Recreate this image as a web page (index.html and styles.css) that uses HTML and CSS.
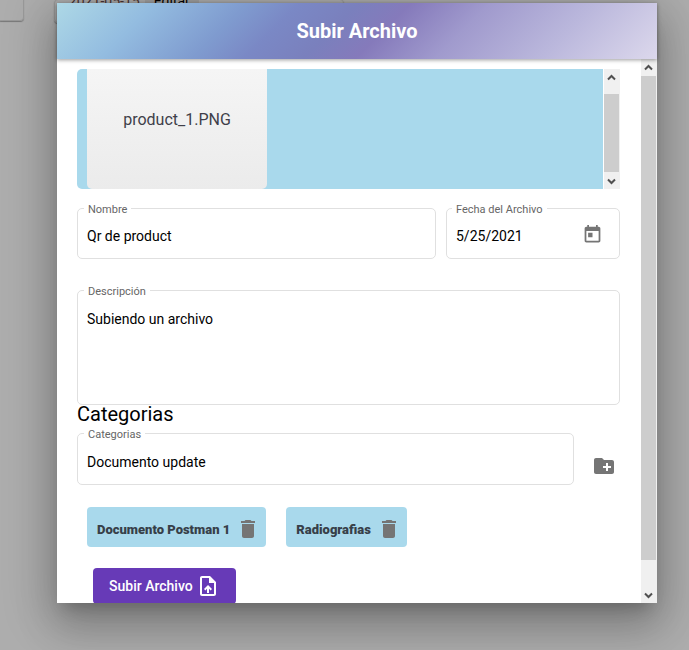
FILE: index.html
```html
<!DOCTYPE html>
<html lang="es">
<head>
<meta charset="utf-8">
<meta name="viewport" content="width=device-width, initial-scale=1">
<title>Subir Archivo</title>
<link rel="stylesheet" href="styles.css">
</head>
<body>
<div class="page">
  <div class="page-card page-card-start"></div>
  <div class="page-card"><span>2021-05-15</span><span class="page-edit">Editar</span></div>
</div>
<main class="dialog" role="dialog" aria-labelledby="title">
  <header class="dialog-header"><h1 id="title">Subir Archivo</h1></header>
  <div class="dialog-body">
    <form class="content">
      <section class="preview">
        <div class="preview-area"><div class="file">product_1.PNG</div></div>
        <div class="scrollbar scrollbar-preview" aria-hidden="true">
          <svg class="arrow" viewBox="0 0 9 7"><path d="M1 5.500 4.500 2 8 5.500"/></svg>
          <div class="thumb"></div>
          <svg class="arrow" viewBox="0 0 9 7"><path d="M1 1.500 4.500 5 8 1.500"/></svg>
        </div>
      </section>
      <div class="row">
        <div class="field field-name">
          <label for="name">Nombre</label>
          <input id="name" type="text" value="Qr de product">
        </div>
        <div class="field field-date">
          <label for="date">Fecha del Archivo</label>
          <input id="date" type="text" value="5/25/2021">
          <button class="icon-button" type="button" aria-label="Abrir calendario">
            <svg class="icon-date" viewBox="0 0 24 24"><path d="M19 3h-1V1h-2v2H8V1H6v2H5c-1.110 0-2 .9-2 2v14c0 1.100.89 2 2 2h14c1.100 0 2-.9 2-2V5c0-1.100-.9-2-2-2zm0 16H5V8h14v11zM7 10h5v5H7z"/></svg>
          </button>
        </div>
      </div>
      <div class="field field-description">
        <label for="description">Descripción</label>
        <textarea id="description">Subiendo un archivo</textarea>
      </div>
      <h2>Categorias</h2>
      <div class="row row-category">
        <div class="field field-category">
          <label for="category">Categorias</label>
          <input id="category" type="text" value="Documento update">
        </div>
        <button class="icon-button add" type="button" aria-label="Agregar categoria">
          <svg class="icon" viewBox="0 0 24 24"><path d="M20 6h-8l-2-2H4c-1.110 0-1.990.89-1.990 2L2 18c0 1.110.89 2 2 2h16c1.110 0 2-.89 2-2V8c0-1.110-.89-2-2-2zm-1 8h-3v3h-2v-3h-3v-2h3V9h2v3h3v2z"/></svg>
        </button>
      </div>
      <div class="chips">
        <div class="chip">Documento Postman 1
          <button class="icon-button" type="button" aria-label="Eliminar Documento Postman 1"><svg class="icon" viewBox="0 0 24 24"><path d="M6 19c0 1.100.9 2 2 2h8c1.100 0 2-.9 2-2V7H6v12zM19 4h-3.500l-1-1h-5l-1 1H5v2h14V4z"/></svg></button>
        </div>
        <div class="chip">Radiografias
          <button class="icon-button" type="button" aria-label="Eliminar Radiografias"><svg class="icon" viewBox="0 0 24 24"><path d="M6 19c0 1.100.9 2 2 2h8c1.100 0 2-.9 2-2V7H6v12zM19 4h-3.500l-1-1h-5l-1 1H5v2h14V4z"/></svg></button>
        </div>
      </div>
      <button class="submit" type="submit">Subir Archivo
        <svg class="icon" viewBox="0 0 24 24"><path d="M14 2H6c-1.100 0-1.990.9-1.990 2L4 20c0 1.100.89 2 1.990 2H18c1.100 0 2-.9 2-2V8l-6-6zm4 18H6V4h7v5h5v11zM8 15.010l1.410 1.410L11 14.840V19h2v-4.160l1.590 1.590L16 15.010 12.010 11 8 15.010z"/></svg>
      </button>
    </form>
    <div class="scrollbar" aria-hidden="true">
      <svg class="arrow" viewBox="0 0 9 7"><path d="M1 5.500 4.500 2 8 5.500"/></svg>
      <div class="thumb"></div>
      <svg class="arrow" viewBox="0 0 9 7"><path d="M1 1.500 4.500 5 8 1.500"/></svg>
    </div>
  </div>
</main>
</body>
</html>
```
FILE: styles.css
```css
* { box-sizing: border-box; }

body {
  margin: 0;
  height: 100vh;
  padding: 3px 32px 47px 57px;
  display: flex;
  background: #adadad;
  color: #000;
  font-family: Roboto, "Liberation Sans", sans-serif;
  font-size: 14px;
  overflow: hidden;
}

button, input, textarea { font: inherit; color: inherit; }

/* Page seen behind the dialog */
.page {
  position: absolute;
  inset: 0;
  display: flex;
  align-items: flex-start;
  gap: 30px;
}

.page-card {
  width: 290px;
  height: 24px;
  margin-top: -1px;
  padding-left: 14px;
  border: 1px solid #999;
  border-radius: 4px;
  box-shadow: 0 1px 1px #777;
  line-height: 2px;
  white-space: nowrap;
}

.page-card span { color: #4a3434; }
.page-card .page-edit {
  display: inline-block;
  margin-left: 5px;
  padding: 0 9px 3px;
  background: #a0a0a0;
  color: #000;
}

.page-card-start {
  width: 24px;
  height: 22px;
  border-left: 0;
  border-radius: 0 0 4px 0;
}

.dialog {
  position: relative;
  flex: 1;
  display: flex;
  flex-direction: column;
  background: #fff;
  box-shadow: 0 11px 15px -7px rgba(0, 0, 0, .2),
    0 24px 38px 3px rgba(0, 0, 0, .16),
    0 9px 46px 8px rgba(0, 0, 0, .18);
}

.dialog-header {
  position: relative;
  flex: none;
  height: 56px;
  display: flex;
  align-items: center;
  justify-content: center;
  background: linear-gradient(135deg, #add8e6 0%, #93bce0 15%, #7f9bcf 29%, #7a88c5 37%, #7a80bd 46%, #857abb 54%, #a09acd 66%, #bab7dc 82%, #dcd8ec 100%);
  box-shadow: 0 1px 4px rgba(0, 0, 0, .4);
}

h1, h2 { margin: 0; font-size: 20px; }
h1 { color: #fff; font-weight: 700; }
h2 { margin-top: -1px; line-height: 20px; font-weight: 400; }

.dialog-body { flex: 1; min-height: 0; display: flex; }

.content {
  flex: 1;
  min-width: 0;
  padding: 10px 21px 0 20px;
  overflow: hidden;
}

.scrollbar {
  flex: none;
  width: 16px;
  padding: 5px 1px 4px 0;
  display: flex;
  flex-direction: column;
  align-items: center;
  background: #f0f0f0;
}

.thumb { width: 100%; height: 484px; margin: 5px 0 auto; background: #cdcdcd; }
.arrow { flex: none; width: 9px; height: 7px; fill: none; stroke: #505050; stroke-width: 2; }

.preview { display: flex; gap: 1px; height: 120px; }
.preview-area {
  flex: 1;
  padding-left: 10px;
  background: #a9d9ec;
  border-radius: 5px 0 0 5px;
}
.file {
  width: 180px;
  height: 100%;
  padding-top: 41px;
  border-radius: 0 0 5px 5px;
  background: linear-gradient(#f5f5f5, #ebebeb);
  color: #3f3f4a;
  font-size: 16px;
  line-height: 20px;
  text-align: center;
}
.scrollbar-preview .thumb { height: 78px; margin-top: 13px; }

.row { display: flex; gap: 10px; margin-top: 19px; }

.field {
  position: relative;
  display: flex;
  align-items: center;
  height: 51px;
  padding: 0 10px 0 9px;
  border: 1px solid #e0e0e0;
  border-radius: 5px;
}
.field label {
  position: absolute;
  top: -6px;
  left: 6px;
  padding: 0 4px;
  background: #fff;
  color: #666;
  font-size: 11px;
  line-height: 14px;
}
.field input, .field textarea {
  flex: 1;
  min-width: 0;
  padding: 5px 0 0;
  border: 0;
  outline: 0;
  background: none;
  line-height: 20px;
}
.field-name { flex: 1; }
.field-date { width: 174px; }
.field-date label { left: 5px; }
.field-description { height: 115px; margin-top: 31px; align-items: stretch; }
.field-description textarea { padding-top: 18px; resize: none; }
.field-category { flex: 1; height: 52px; }

.row-category { margin-top: 9px; gap: 18px; }

.icon-button {
  display: flex;
  padding: 0;
  border: 0;
  background: none;
  color: #757575;
}
.add { align-self: center; padding: 13px 4px 0 0; }
.icon { width: 24px; height: 24px; fill: currentColor; }
.icon-date { width: 21px; height: 21px; margin: 1px 6px 0 0; fill: currentColor; }

.chips { display: flex; gap: 20px; margin: 22px 10px 21px; }
.chip {
  display: flex;
  align-items: center;
  gap: 6px;
  height: 40px;
  padding: 4px 6px 0 10px;
  border-radius: 4px;
  background: #a9d9ec;
  color: #373f49;
  font-size: 13px;
  font-weight: 900;
}

.submit {
  display: flex;
  align-items: center;
  gap: 3px;
  height: 36px;
  margin-left: 16px;
  padding: 0 16px;
  border: 0;
  border-radius: 4px;
  background: #673ab7;
  color: #fff;
  font-weight: 500;
}
```
